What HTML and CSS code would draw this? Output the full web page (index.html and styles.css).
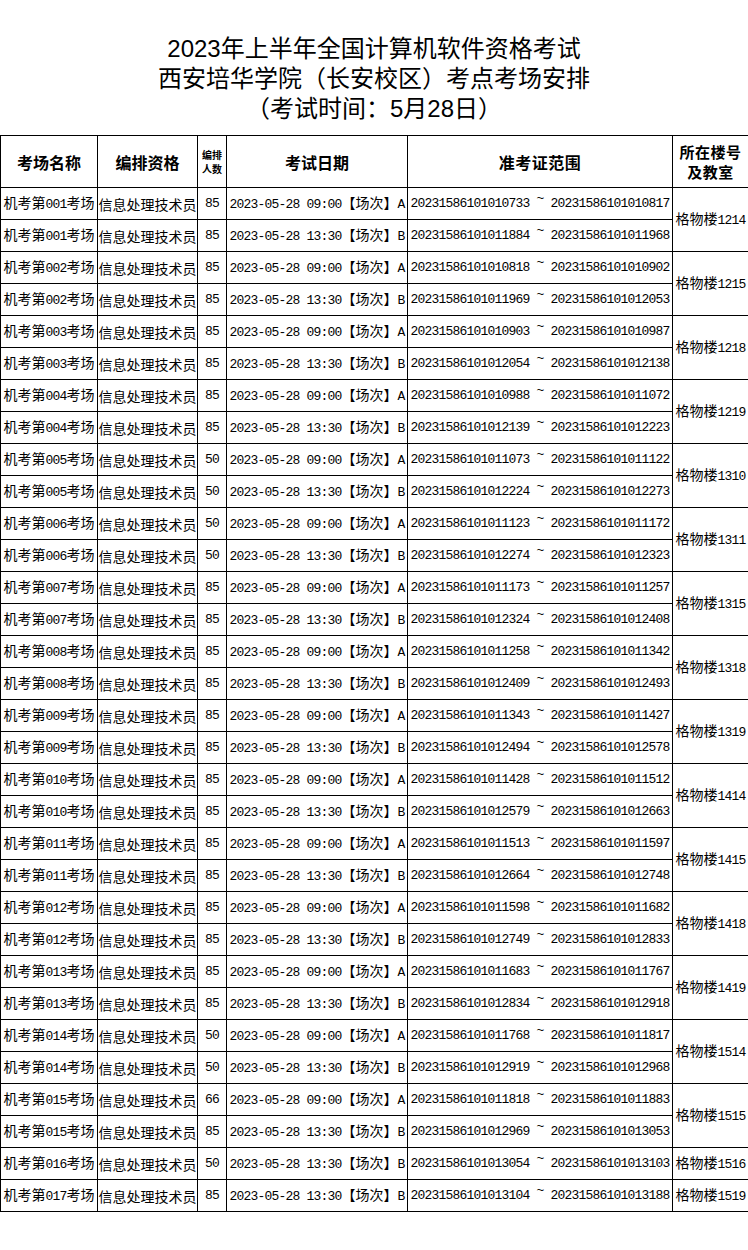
FILE: index.html
```html
<!DOCTYPE html>
<html lang="zh-CN">
<head>
<meta charset="utf-8">
<title>考场安排</title>
<link rel="stylesheet" href="styles.css">
</head>
<body>
<div class="title">
  <div>2023年上半年全国计算机软件资格考试</div>
  <div>西安培华学院（长安校区）考点考场安排</div>
  <div>（考试时间：5月28日）</div>
</div>
<table class="grid">
  <colgroup>
    <col class="w1"><col class="w2"><col class="w3"><col class="w4"><col class="w5"><col class="w6">
  </colgroup>
  <thead>
    <tr class="head">
      <th>考场名称</th>
      <th>编排资格</th>
      <th class="small"><span class="ln">编排</span><span class="ln">人数</span></th>
      <th>考试日期</th>
      <th class="wide">准考证范围</th>
      <th class="two"><span class="ln">所在楼号</span><span class="ln">及教室</span></th>
    </tr>
  </thead>
  <tbody>
    <tr><td>机考第<span class="m">001</span>考场</td><td>信息处理技术员</td><td class="m">85</td><td><span class="m">2023-05-28 09:00</span>【场次】<span class="m">A</span></td><td class="m">20231586101010733 <span class="t">~</span> 20231586101010817</td><td rowspan="2">格物楼<span class="m">1214</span></td></tr>
    <tr><td>机考第<span class="m">001</span>考场</td><td>信息处理技术员</td><td class="m">85</td><td><span class="m">2023-05-28 13:30</span>【场次】<span class="m">B</span></td><td class="m">20231586101011884 <span class="t">~</span> 20231586101011968</td></tr>
    <tr><td>机考第<span class="m">002</span>考场</td><td>信息处理技术员</td><td class="m">85</td><td><span class="m">2023-05-28 09:00</span>【场次】<span class="m">A</span></td><td class="m">20231586101010818 <span class="t">~</span> 20231586101010902</td><td rowspan="2">格物楼<span class="m">1215</span></td></tr>
    <tr><td>机考第<span class="m">002</span>考场</td><td>信息处理技术员</td><td class="m">85</td><td><span class="m">2023-05-28 13:30</span>【场次】<span class="m">B</span></td><td class="m">20231586101011969 <span class="t">~</span> 20231586101012053</td></tr>
    <tr><td>机考第<span class="m">003</span>考场</td><td>信息处理技术员</td><td class="m">85</td><td><span class="m">2023-05-28 09:00</span>【场次】<span class="m">A</span></td><td class="m">20231586101010903 <span class="t">~</span> 20231586101010987</td><td rowspan="2">格物楼<span class="m">1218</span></td></tr>
    <tr><td>机考第<span class="m">003</span>考场</td><td>信息处理技术员</td><td class="m">85</td><td><span class="m">2023-05-28 13:30</span>【场次】<span class="m">B</span></td><td class="m">20231586101012054 <span class="t">~</span> 20231586101012138</td></tr>
    <tr><td>机考第<span class="m">004</span>考场</td><td>信息处理技术员</td><td class="m">85</td><td><span class="m">2023-05-28 09:00</span>【场次】<span class="m">A</span></td><td class="m">20231586101010988 <span class="t">~</span> 20231586101011072</td><td rowspan="2">格物楼<span class="m">1219</span></td></tr>
    <tr><td>机考第<span class="m">004</span>考场</td><td>信息处理技术员</td><td class="m">85</td><td><span class="m">2023-05-28 13:30</span>【场次】<span class="m">B</span></td><td class="m">20231586101012139 <span class="t">~</span> 20231586101012223</td></tr>
    <tr><td>机考第<span class="m">005</span>考场</td><td>信息处理技术员</td><td class="m">50</td><td><span class="m">2023-05-28 09:00</span>【场次】<span class="m">A</span></td><td class="m">20231586101011073 <span class="t">~</span> 20231586101011122</td><td rowspan="2">格物楼<span class="m">1310</span></td></tr>
    <tr><td>机考第<span class="m">005</span>考场</td><td>信息处理技术员</td><td class="m">50</td><td><span class="m">2023-05-28 13:30</span>【场次】<span class="m">B</span></td><td class="m">20231586101012224 <span class="t">~</span> 20231586101012273</td></tr>
    <tr><td>机考第<span class="m">006</span>考场</td><td>信息处理技术员</td><td class="m">50</td><td><span class="m">2023-05-28 09:00</span>【场次】<span class="m">A</span></td><td class="m">20231586101011123 <span class="t">~</span> 20231586101011172</td><td rowspan="2">格物楼<span class="m">1311</span></td></tr>
    <tr><td>机考第<span class="m">006</span>考场</td><td>信息处理技术员</td><td class="m">50</td><td><span class="m">2023-05-28 13:30</span>【场次】<span class="m">B</span></td><td class="m">20231586101012274 <span class="t">~</span> 20231586101012323</td></tr>
    <tr><td>机考第<span class="m">007</span>考场</td><td>信息处理技术员</td><td class="m">85</td><td><span class="m">2023-05-28 09:00</span>【场次】<span class="m">A</span></td><td class="m">20231586101011173 <span class="t">~</span> 20231586101011257</td><td rowspan="2">格物楼<span class="m">1315</span></td></tr>
    <tr><td>机考第<span class="m">007</span>考场</td><td>信息处理技术员</td><td class="m">85</td><td><span class="m">2023-05-28 13:30</span>【场次】<span class="m">B</span></td><td class="m">20231586101012324 <span class="t">~</span> 20231586101012408</td></tr>
    <tr><td>机考第<span class="m">008</span>考场</td><td>信息处理技术员</td><td class="m">85</td><td><span class="m">2023-05-28 09:00</span>【场次】<span class="m">A</span></td><td class="m">20231586101011258 <span class="t">~</span> 20231586101011342</td><td rowspan="2">格物楼<span class="m">1318</span></td></tr>
    <tr><td>机考第<span class="m">008</span>考场</td><td>信息处理技术员</td><td class="m">85</td><td><span class="m">2023-05-28 13:30</span>【场次】<span class="m">B</span></td><td class="m">20231586101012409 <span class="t">~</span> 20231586101012493</td></tr>
    <tr><td>机考第<span class="m">009</span>考场</td><td>信息处理技术员</td><td class="m">85</td><td><span class="m">2023-05-28 09:00</span>【场次】<span class="m">A</span></td><td class="m">20231586101011343 <span class="t">~</span> 20231586101011427</td><td rowspan="2">格物楼<span class="m">1319</span></td></tr>
    <tr><td>机考第<span class="m">009</span>考场</td><td>信息处理技术员</td><td class="m">85</td><td><span class="m">2023-05-28 13:30</span>【场次】<span class="m">B</span></td><td class="m">20231586101012494 <span class="t">~</span> 20231586101012578</td></tr>
    <tr><td>机考第<span class="m">010</span>考场</td><td>信息处理技术员</td><td class="m">85</td><td><span class="m">2023-05-28 09:00</span>【场次】<span class="m">A</span></td><td class="m">20231586101011428 <span class="t">~</span> 20231586101011512</td><td rowspan="2">格物楼<span class="m">1414</span></td></tr>
    <tr><td>机考第<span class="m">010</span>考场</td><td>信息处理技术员</td><td class="m">85</td><td><span class="m">2023-05-28 13:30</span>【场次】<span class="m">B</span></td><td class="m">20231586101012579 <span class="t">~</span> 20231586101012663</td></tr>
    <tr><td>机考第<span class="m">011</span>考场</td><td>信息处理技术员</td><td class="m">85</td><td><span class="m">2023-05-28 09:00</span>【场次】<span class="m">A</span></td><td class="m">20231586101011513 <span class="t">~</span> 20231586101011597</td><td rowspan="2">格物楼<span class="m">1415</span></td></tr>
    <tr><td>机考第<span class="m">011</span>考场</td><td>信息处理技术员</td><td class="m">85</td><td><span class="m">2023-05-28 13:30</span>【场次】<span class="m">B</span></td><td class="m">20231586101012664 <span class="t">~</span> 20231586101012748</td></tr>
    <tr><td>机考第<span class="m">012</span>考场</td><td>信息处理技术员</td><td class="m">85</td><td><span class="m">2023-05-28 09:00</span>【场次】<span class="m">A</span></td><td class="m">20231586101011598 <span class="t">~</span> 20231586101011682</td><td rowspan="2">格物楼<span class="m">1418</span></td></tr>
    <tr><td>机考第<span class="m">012</span>考场</td><td>信息处理技术员</td><td class="m">85</td><td><span class="m">2023-05-28 13:30</span>【场次】<span class="m">B</span></td><td class="m">20231586101012749 <span class="t">~</span> 20231586101012833</td></tr>
    <tr><td>机考第<span class="m">013</span>考场</td><td>信息处理技术员</td><td class="m">85</td><td><span class="m">2023-05-28 09:00</span>【场次】<span class="m">A</span></td><td class="m">20231586101011683 <span class="t">~</span> 20231586101011767</td><td rowspan="2">格物楼<span class="m">1419</span></td></tr>
    <tr><td>机考第<span class="m">013</span>考场</td><td>信息处理技术员</td><td class="m">85</td><td><span class="m">2023-05-28 13:30</span>【场次】<span class="m">B</span></td><td class="m">20231586101012834 <span class="t">~</span> 20231586101012918</td></tr>
    <tr><td>机考第<span class="m">014</span>考场</td><td>信息处理技术员</td><td class="m">50</td><td><span class="m">2023-05-28 09:00</span>【场次】<span class="m">A</span></td><td class="m">20231586101011768 <span class="t">~</span> 20231586101011817</td><td rowspan="2">格物楼<span class="m">1514</span></td></tr>
    <tr><td>机考第<span class="m">014</span>考场</td><td>信息处理技术员</td><td class="m">50</td><td><span class="m">2023-05-28 13:30</span>【场次】<span class="m">B</span></td><td class="m">20231586101012919 <span class="t">~</span> 20231586101012968</td></tr>
    <tr><td>机考第<span class="m">015</span>考场</td><td>信息处理技术员</td><td class="m">66</td><td><span class="m">2023-05-28 09:00</span>【场次】<span class="m">A</span></td><td class="m">20231586101011818 <span class="t">~</span> 20231586101011883</td><td rowspan="2">格物楼<span class="m">1515</span></td></tr>
    <tr><td>机考第<span class="m">015</span>考场</td><td>信息处理技术员</td><td class="m">85</td><td><span class="m">2023-05-28 13:30</span>【场次】<span class="m">B</span></td><td class="m">20231586101012969 <span class="t">~</span> 20231586101013053</td></tr>
    <tr><td>机考第<span class="m">016</span>考场</td><td>信息处理技术员</td><td class="m">50</td><td><span class="m">2023-05-28 13:30</span>【场次】<span class="m">B</span></td><td class="m">20231586101013054 <span class="t">~</span> 20231586101013103</td><td>格物楼<span class="m">1516</span></td></tr>
    <tr><td>机考第<span class="m">017</span>考场</td><td>信息处理技术员</td><td class="m">85</td><td><span class="m">2023-05-28 13:30</span>【场次】<span class="m">B</span></td><td class="m">20231586101013104 <span class="t">~</span> 20231586101013188</td><td>格物楼<span class="m">1519</span></td></tr>
  </tbody>
</table>
</body>
</html>
```

FILE: styles.css
```css
html, body {
  margin: 0;
  padding: 0;
  background: #ffffff;
  color: #000000;
}

body {
  font-family: "Noto Sans CJK SC", sans-serif;
}

.title {
  padding-top: 34px;
  margin-bottom: 11px;
  text-align: center;
  font-family: "Liberation Sans", "Noto Sans CJK SC", sans-serif;
  font-size: 24px;
  line-height: 30px;
}

.grid {
  width: 748px;
  table-layout: fixed;
  border-collapse: collapse;
  font-family: "Noto Sans CJK SC", sans-serif;
  font-size: 14px;
}

.w1 { width: 97px; }
.w2 { width: 100px; }
.w3 { width: 29px; }
.w4 { width: 181px; }
.w5 { width: 265px; }
.w6 { width: 76px; }

.grid th,
.grid td {
  border: 1px solid #000;
  padding: 0;
  text-align: center;
  vertical-align: middle;
  white-space: nowrap;
}

.grid tbody tr {
  height: 32px;
}

.grid td {
  line-height: 18px;
}

.head {
  height: 52px;
}

.head th {
  font-size: 16px;
  font-weight: 700;
  line-height: 18px;
}

.head th.small {
  font-size: 10px;
}

.head th.wide {
  letter-spacing: 0.5px;
}

.head th.two {
  font-size: 15px;
  letter-spacing: 0.5px;
}

.ln {
  display: block;
}

.head th.small .ln {
  line-height: 14px;
}

.head th.two .ln {
  line-height: 20px;
}

.m {
  font-family: "Liberation Mono", monospace;
  font-size: 13px;
  letter-spacing: -0.8px;
  white-space: pre;
}

.t {
  position: relative;
  top: -5px;
}
```
